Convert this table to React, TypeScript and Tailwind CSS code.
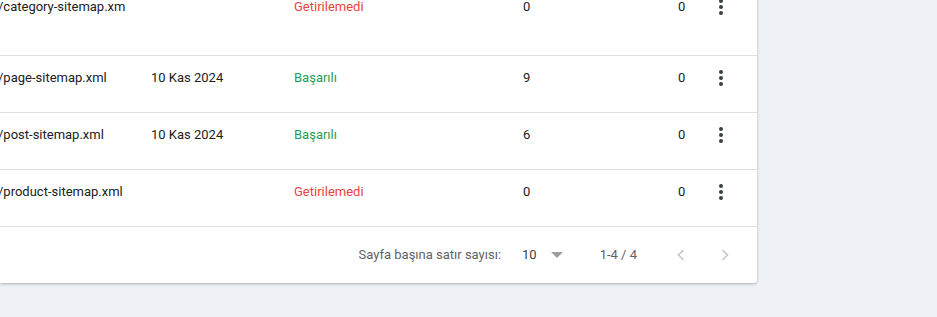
import React from "react";

interface Sitemap {
    path: string;
    date: string;
    ok: boolean;
    found: number;
    other: number;
    tall?: boolean;
}

const rows: Sitemap[] = [
    { path: "/category-sitemap.xm", date: "", ok: false, found: 0, other: 0, tall: true },
    { path: "/page-sitemap.xml", date: "10 Kas 2024", ok: true, found: 9, other: 0 },
    { path: "/post-sitemap.xml", date: "10 Kas 2024", ok: true, found: 6, other: 0 },
    { path: "/product-sitemap.xml", date: "", ok: false, found: 0, other: 0 },
];

function MoreIcon() {
    return (
        <svg width="24" height="24" viewBox="0 0 24 24" className="fill-[#3c4043]">
            <circle cx="12" cy="6" r="2" />
            <circle cx="12" cy="12" r="2" />
            <circle cx="12" cy="18" r="2" />
        </svg>
    );
}

function Chevron({ dir }: { dir: "left" | "right" }) {
    return (
        <svg width="24" height="24" viewBox="0 0 24 24" fill="none" className="stroke-[#c4c7cc]">
            {dir === "left" ? (
                <polyline points="14.5,7 9.5,12 14.5,17" strokeWidth="1.6" />
            ) : (
                <polyline points="9.5,7 14.5,12 9.5,17" strokeWidth="1.6" />
            )}
        </svg>
    );
}

function Row({ row }: { row: Sitemap }) {
    return (
        <div
            className={`flex items-start border-b border-[#e0e0e0] pt-[12px] ${row.tall ? "h-[71px]" : "h-[57px]"}`}
        >
            <div className="w-[153px] -ml-[2px] leading-5 text-[#202124] whitespace-nowrap overflow-hidden">
                {row.path}
            </div>
            <div className="w-[143px] leading-5 text-[#202124]">{row.date}</div>
            <div className={`w-[229px] leading-5 ${row.ok ? "text-[#1e9e5a]" : "text-[#e8453c]"}`}>
                {row.ok ? "Başarılı" : "Getirilemedi"}
            </div>
            <div className="w-[155px] leading-5 text-[#202124]">{row.found}</div>
            <div className="w-[30px] leading-5 text-[#202124]">{row.other}</div>
            <div className="-mt-[2px] ml-[1px]">
                <MoreIcon />
            </div>
        </div>
    );
}

export default function App() {
    return (
        <div
            className="min-h-[317px] w-[937px] bg-[#eef1f6] overflow-hidden text-[13px]"
            style={{ fontFamily: "Roboto, 'Liberation Sans', sans-serif" }}
        >
            <div className="w-[757px] bg-white rounded-br-[3px] shadow-[0_1px_3px_rgba(0,0,0,0.28)] -mt-[15px]">
                {rows.map((r) => (
                    <Row key={r.path} row={r} />
                ))}
                <div className="flex items-center justify-end h-[56px] pr-[20px] text-[#5f6368]">
                    <span>Sayfa başına satır sayısı:</span>
                    <span className="ml-[21px] text-[#3c4043]">10</span>
                    <span className="ml-[14px] w-0 h-0 border-l-[6px] border-r-[6px] border-t-[6px] border-l-transparent border-r-transparent border-t-[#9e9e9e]" />
                    <span className="ml-[37px]">1-4 / 4</span>
                    <span className="ml-[32px]">
                        <Chevron dir="left" />
                    </span>
                    <span className="ml-[20px]">
                        <Chevron dir="right" />
                    </span>
                </div>
            </div>
        </div>
    );
}
